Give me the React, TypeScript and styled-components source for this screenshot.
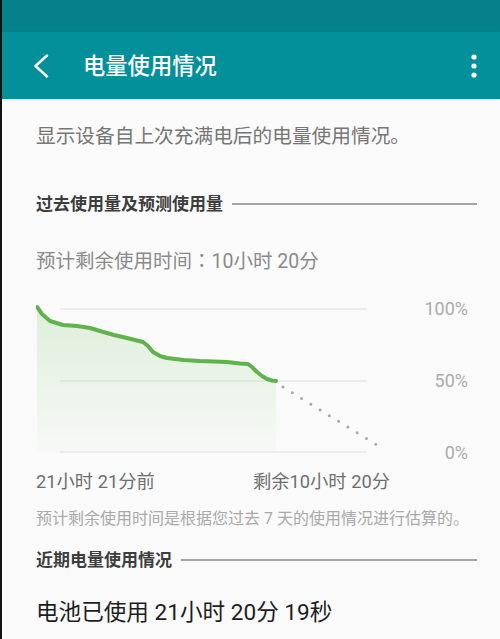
import React from 'react';
import styled, { createGlobalStyle } from 'styled-components';

// ---------
// GLOBAL
// ---------

let GlobalStyle = createGlobalStyle`
  html, body {
    margin: 0;
    padding: 0;
    background: #fafafa;
  }
  body {
    font-family: Roboto, "Noto Sans CJK SC", sans-serif;
  }
`;

let Page = styled.div`
  box-sizing: border-box;
  width: 500px;
  height: 639px;
  overflow: hidden;
  border-left: 2px solid #111;
  background: #fafafa;
`;

// ---------
// TOP BARS
// ---------

let StatusBar = styled.div`
  height: 32px;
  background: #04818b;
`;

let Toolbar = styled.header`
  height: 67px;
  background: #03909b;
  display: flex;
  align-items: center;
  padding: 0 0 0 31px;
  box-shadow: 0 1px 2px rgba(0, 0, 0, 0.12);
`;

let Title = styled.h1`
  margin: 0 0 0 34px;
  flex: 1;
  font-size: 22.3px;
  font-weight: 500;
  color: #fff;
  line-height: 30px;
`;

let IconButton = styled.button`
  display: flex;
  align-items: center;
  justify-content: center;
  padding: 0;
  border: 0;
  background: none;
  width: ${({ $w }: { $w: number }) => $w}px;
  height: 40px;
`;

function BackIcon() {
  return (
    <svg width="16" height="24" viewBox="0 0 16 24">
      <polyline
        points="14,1.5 2.5,12 14,22.5"
        fill="none"
        stroke="#fff"
        strokeWidth="2.4"
        strokeLinecap="round"
        strokeLinejoin="round"
      />
    </svg>
  );
}

function MoreIcon() {
  return (
    <svg width="8" height="26" viewBox="0 0 8 26">
      <circle cx="4" cy="4" r="2.6" fill="#fff" />
      <circle cx="4" cy="13" r="2.6" fill="#fff" />
      <circle cx="4" cy="22" r="2.6" fill="#fff" />
    </svg>
  );
}

// ---------
// CONTENT
// ---------

let Content = styled.main`
  padding: 0 23px 0 34px;
`;

let Description = styled.p`
  margin: 24px 0 0;
  font-size: 19.7px;
  line-height: 28px;
  color: #767676;
  white-space: nowrap;
`;

let SectionHeader = styled.div<{ $top: number }>`
  margin-top: ${({ $top }) => $top}px;
  display: flex;
  align-items: center;
  gap: 9px;
  font-size: 17px;
  font-weight: 700;
  line-height: 24px;
  color: #3d3d3d;

  &::after {
    content: '';
    flex: 1;
    height: 1.5px;
    background: #a3a3a3;
  }
`;

let Estimate = styled.p`
  margin: 33px 0 0;
  height: 26px;
  overflow: visible;
  font-size: 19.5px;
  line-height: 26px;
  color: #8a8a8a;
`;

// centred full-width colon, as the traditional CJK face draws it
let Colon = styled.span`
  font-family: "Noto Sans CJK TC", sans-serif;
  line-height: 1;
`;

let ChartRow = styled.div`
  margin-top: 21px;
  display: flex;
`;

let PercentColumn = styled.div`
  flex: 1;
  display: flex;
  flex-direction: column;
  align-items: flex-end;
  gap: 52px;
  padding: 3px 9px 0 0;
`;

let Percent = styled.span`
  font-size: 18px;
  line-height: 20px;
  color: #ababab;
`;

let AxisRow = styled.div`
  margin-top: 7px;
  width: 354px;
  display: flex;
  justify-content: space-between;
  font-size: 18.3px;
  line-height: 24px;
  color: #6e6e6e;
`;

let Note = styled.p`
  margin: 15px 0 0;
  font-size: 16px;
  line-height: 20px;
  color: #a9a9a9;
  white-space: nowrap;
`;

let BatteryUsed = styled.p`
  margin: 26px 0 0;
  font-size: 22.6px;
  line-height: 30px;
  color: #1e1e1e;
`;

let linePoints: [number, number][] = [
  [1, 11],
  [6, 18],
  [14, 25],
  [27, 29],
  [41, 30],
  [54, 32],
  [64, 35],
  [78, 39],
  [91, 42],
  [107, 46],
  [112, 50],
  [117, 56],
  [124, 60],
  [131, 62],
  [148, 64],
  [164, 65],
  [178, 65.5],
  [191, 66],
  [204, 67.5],
  [212, 68],
  [216, 71],
  [221, 76],
  [226, 80],
  [231, 83],
  [236, 84.5],
  [240, 85],
];

function UsageChart() {
  let path = linePoints.map(([x, y], i) => `${i ? 'L' : 'M'}${x} ${y}`).join(' ');
  let area = `${path} L240 157 L1 157 Z`;

  return (
    <svg width="364" height="166" viewBox="0 0 364 166">
      <defs>
        <linearGradient id="usageFill" x1="0" y1="0" x2="0" y2="1">
          <stop offset="0" stopColor="#7cc46a" stopOpacity="0.22" />
          <stop offset="1" stopColor="#7cc46a" stopOpacity="0.02" />
        </linearGradient>
      </defs>
      {[13, 85, 156].map((y) => (
        <line key={y} x1="24" x2="331" y1={y} y2={y} stroke="#e0e0e0" strokeWidth="1.2" />
      ))}
      <path d={area} fill="url(#usageFill)" />
      <path
        d={path}
        fill="none"
        stroke="#5fb34a"
        strokeWidth="4"
        strokeLinecap="round"
        strokeLinejoin="round"
      />
      <line
        x1="247"
        y1="91"
        x2="349"
        y2="154"
        stroke="#a8a8a8"
        strokeWidth="3"
        strokeLinecap="round"
        strokeDasharray="0 10.9"
      />
    </svg>
  );
}

export default function App() {
  return (
    <React.Fragment>
      <GlobalStyle />
      <Page>
        <StatusBar />
        <Toolbar>
          <IconButton $w={16}>
            <BackIcon />
          </IconButton>
          <Title>电量使用情况</Title>
          <IconButton $w={52}>
            <MoreIcon />
          </IconButton>
        </Toolbar>
        <Content>
          <Description>显示设备自上次充满电后的电量使用情况。</Description>
          <SectionHeader $top={41}>过去使用量及预测使用量</SectionHeader>
          <Estimate>
            预计剩余使用时间<Colon>：</Colon>10小时 20分
          </Estimate>
          <ChartRow>
            <UsageChart />
            <PercentColumn>
              <Percent>100%</Percent>
              <Percent>50%</Percent>
              <Percent>0%</Percent>
            </PercentColumn>
          </ChartRow>
          <AxisRow>
            <span>21小时 21分前</span>
            <span>剩余10小时 20分</span>
          </AxisRow>
          <Note>预计剩余使用时间是根据您过去 7 天的使用情况进行估算的。</Note>
          <SectionHeader $top={19}>近期电量使用情况</SectionHeader>
          <BatteryUsed>电池已使用 21小时 20分 19秒</BatteryUsed>
        </Content>
      </Page>
    </React.Fragment>
  );
}
